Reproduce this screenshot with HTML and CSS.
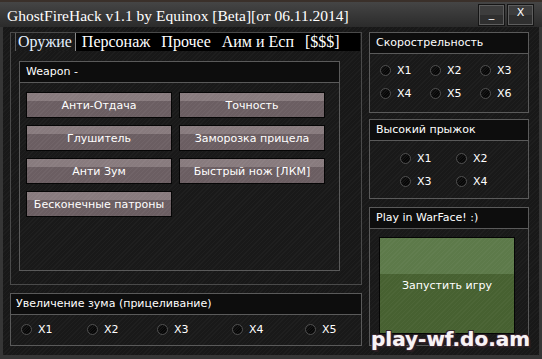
FILE: index.html
```html
<!DOCTYPE html>
<html>

<head>
    <meta charset="UTF-8">
    <title>GhostFireHack v1.1</title>
    <link rel="stylesheet" href="styles.css">
</head>

<body>
    <div class="window">
        <div class="titlebar">
            <span class="title">GhostFireHack v1.1 by Equinox [Beta][от 06.11.2014]</span>
            <div class="caption-buttons">
                <span class="caption-btn minimize">_</span>
                <span class="caption-btn close">X</span>
            </div>
        </div>

        <div class="client">
            <div class="left-col">
                <div class="tabcontrol">
                    <div class="tabstrip">
                        <span class="tab active">Оружие</span>
                        <span class="tab">Персонаж</span>
                        <span class="tab">Прочее</span>
                        <span class="tab">Аим и Есп</span>
                        <span class="tab">[$$$]</span>
                    </div>
                    <div class="tabpage">
                        <div class="group weapon-group">
                            <div class="group-head">Weapon -</div>
                            <div class="btn-grid">
                                <button class="hack-btn">Анти-Отдача</button>
                                <button class="hack-btn">Точность</button>
                                <button class="hack-btn">Глушитель</button>
                                <button class="hack-btn">Заморозка прицела</button>
                                <button class="hack-btn">Анти Зум</button>
                                <button class="hack-btn">Быстрый нож [ЛКМ]</button>
                                <button class="hack-btn">Бесконечные патроны</button>
                            </div>
                        </div>
                    </div>
                </div>

                <div class="group zoom-group">
                    <div class="group-head">Увеличение зума (прицеливание)</div>
                    <div class="radios zoom-radios">
                        <label class="radio"><span class="dot"></span>X1</label>
                        <label class="radio"><span class="dot"></span>X2</label>
                        <label class="radio"><span class="dot"></span>X3</label>
                        <label class="radio"><span class="dot"></span>X4</label>
                        <label class="radio"><span class="dot"></span>X5</label>
                    </div>
                </div>
            </div>

            <div class="right-col">
                <div class="group rate-group">
                    <div class="group-head">Скорострельность</div>
                    <div class="radios rate-radios">
                        <label class="radio"><span class="dot"></span>X1</label>
                        <label class="radio"><span class="dot"></span>X2</label>
                        <label class="radio"><span class="dot"></span>X3</label>
                        <label class="radio"><span class="dot"></span>X4</label>
                        <label class="radio"><span class="dot"></span>X5</label>
                        <label class="radio"><span class="dot"></span>X6</label>
                    </div>
                </div>

                <div class="group jump-group">
                    <div class="group-head">Высокий прыжок</div>
                    <div class="radios jump-radios">
                        <label class="radio"><span class="dot"></span>X1</label>
                        <label class="radio"><span class="dot"></span>X2</label>
                        <label class="radio"><span class="dot"></span>X3</label>
                        <label class="radio"><span class="dot"></span>X4</label>
                    </div>
                </div>

                <div class="group play-group">
                    <div class="group-head">Play in WarFace! :)</div>
                    <button class="play-btn">Запустить игру</button>
                </div>
            </div>
        </div>

        <div class="watermark">play-wf.do.am</div>
    </div>
</body>

</html>
```

FILE: styles.css
```css
body,
html {
    margin: 0;
    background: #1a1a1a;
}

.window {
    position: relative;
    width: 542px;
    height: 359px;
    overflow: hidden;
    background: #363636;
    font-family: 'DejaVu Sans', sans-serif;
    font-size: 11px;
    color: #fff;
}

/* title bar */

.titlebar {
    display: flex;
    justify-content: space-between;
    height: 27px;
    box-sizing: border-box;
    padding: 4px 9px 0 7px;
    border-top: 2px solid #3a302a;
    background: linear-gradient(#454545, #2b2b2b);
}

.title {
    font-family: 'Liberation Serif', serif;
    font-size: 15.5px;
    line-height: 20px;
}

.caption-buttons {
    display: flex;
    gap: 4px;
    margin-top: -1px;
}

.caption-btn {
    width: 23px;
    height: 18px;
    border: 1px solid #5e5e5e;
    box-shadow: 0 0 0 1px #151515;
    background: linear-gradient(#3d3d3d 0 50%, #2f2f2f 50%);
    text-align: center;
    font-size: 11px;
    line-height: 14px;
}

.minimize {
    line-height: 16px;
}

/* client area */

.client {
    display: grid;
    grid-template-columns: 352px 160px;
    column-gap: 7px;
    height: 328px;
    box-sizing: border-box;
    margin: 0 3px 0 3px;
    padding: 5px 0 0 7px;
    background: repeating-linear-gradient(135deg, #1e1e1e 0 1px, #181818 1px 3px);
}

.left-col,
.right-col {
    display: flex;
    flex-direction: column;
}

/* tabs */

.tabcontrol {
    height: 253px;
    box-sizing: border-box;
    border: 1px solid #4a4a4a;
}

.tabstrip {
    display: flex;
    height: 18px;
    margin: 0 1px 0 4px;
    background: #000;
    font-family: 'Liberation Serif', serif;
    font-size: 16px;
    line-height: 18px;
}

.tab {
    padding: 0 5px 0 6px;
}

.tab.active {
    padding: 0 3px 0 2px;
    border-left: 1px solid #5a5a5a;
    border-right: 1px solid #8a8a8a;
    background: repeating-linear-gradient(135deg, #1e1e1e 0 1px, #181818 1px 3px);
    color: #e4f0ff;
}

.tabpage {
    padding: 10px 0 0 8px;
}

/* group boxes */

.group {
    box-sizing: border-box;
    border: 1px solid #5a5a5a;
    background: repeating-linear-gradient(135deg, #1f1f1f 0 1px, #191919 1px 3px);
}

.group-head {
    height: 20px;
    line-height: 20px;
    padding-left: 6px;
    border-bottom: 1px solid #5a5a5a;
    background: #0d0d0d;
}

.weapon-group {
    width: 321px;
    height: 210px;
}

.btn-grid {
    display: grid;
    grid-template-columns: 146px 146px;
    grid-auto-rows: 26px;
    gap: 7px;
    padding: 9px 0 0 6px;
}

.hack-btn {
    margin: 0;
    padding: 0;
    border: 1px solid #050505;
    background:
        repeating-linear-gradient(135deg, rgba(255, 255, 255, .04) 0 1px, transparent 1px 3px),
        linear-gradient(#887b7e 0 8px, #6b5e62 8px);
    font-family: 'DejaVu Sans', sans-serif;
    font-size: 11px;
    color: #fff;
}

.zoom-group {
    height: 53px;
    margin-top: 8px;
}

.zoom-group .group-head {
    padding-left: 5px;
}

/* radio buttons */

.radios {
    display: grid;
    grid-auto-rows: 15px;
    row-gap: 8px;
}

.radio {
    display: flex;
    align-items: center;
    gap: 6px;
}

.dot {
    width: 9px;
    height: 9px;
    border: 1px solid #4e4e4e;
    border-radius: 50%;
    background: repeating-linear-gradient(135deg, #141414 0 1px, #070707 1px 2px);
}

.zoom-radios {
    grid-template-columns: 66px 70px 75px 73px auto;
    padding: 7px 0 0 10px;
}

.rate-group {
    height: 81px;
}

.rate-radios {
    grid-template-columns: repeat(3, 50px);
    padding: 9px 0 0 10px;
}

.jump-group {
    height: 80px;
    margin-top: 6px;
}

.jump-radios {
    grid-template-columns: repeat(2, 56px);
    padding: 10px 0 0 30px;
}

.play-group {
    height: 139px;
    margin-top: 8px;
}

.play-btn {
    display: block;
    width: 136px;
    height: 97px;
    margin: 8px 0 0 9px;
    padding: 0;
    border: 1px solid #050505;
    background:
        repeating-linear-gradient(135deg, rgba(255, 255, 255, .03) 0 1px, transparent 1px 3px),
        linear-gradient(#5d7a4a 0 36px, #476131 36px);
    font-family: 'DejaVu Sans', sans-serif;
    font-size: 11px;
    color: #fff;
}

/* site stamp over the corner */

.watermark {
    position: absolute;
    left: 371px;
    top: 329px;
    font-family: 'DejaVu Sans', sans-serif;
    font-weight: bold;
    font-size: 20px;
    line-height: 20px;
    color: #f7f3f5;
    text-shadow:
        0 0 1px #b08898,
        1px 1px 0 #2a1e23,
        -1px -1px 0 #2a1e23,
        1px -1px 0 #2a1e23,
        -1px 1px 0 #2a1e23,
        2px 2px 0 #2a1e23;
}
```
